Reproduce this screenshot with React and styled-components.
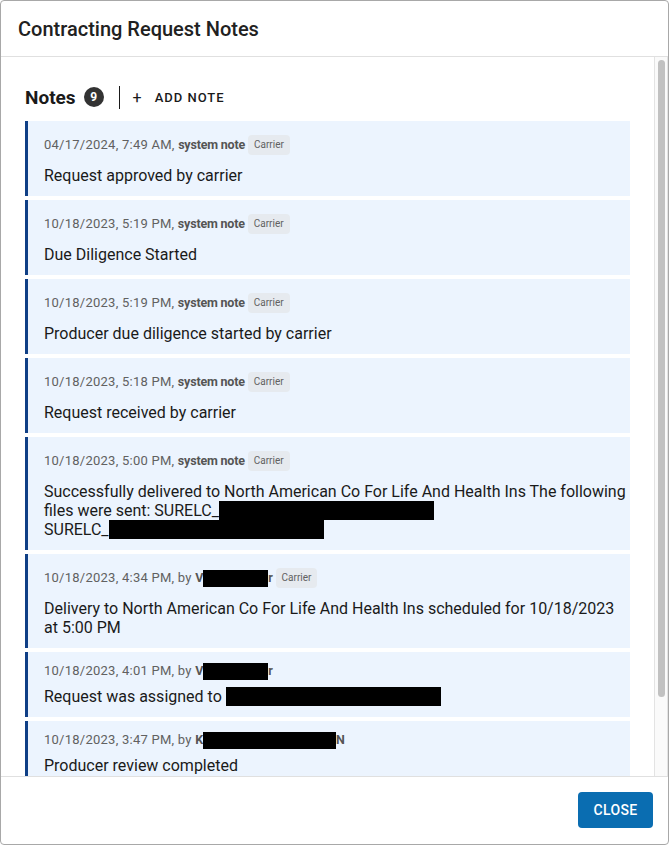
import React from "react";
import styled, { createGlobalStyle } from "styled-components";

const GlobalStyle = createGlobalStyle`
  html, body {
    margin: 0;
    padding: 0;
    background: #ffffff;
  }
  body {
    font-family: Roboto, "Liberation Sans", Arial, sans-serif;
    color: #212121;
  }
  * {
    box-sizing: border-box;
  }
`;

const notes = [
  {
    date: "04/17/2024, 7:49 AM",
    system: true,
    chip: true,
    text: [["Request approved by carrier"]],
  },
  {
    date: "10/18/2023, 5:19 PM",
    system: true,
    chip: true,
    text: [["Due Diligence Started"]],
  },
  {
    date: "10/18/2023, 5:19 PM",
    system: true,
    chip: true,
    text: [["Producer due diligence started by carrier"]],
  },
  {
    date: "10/18/2023, 5:18 PM",
    system: true,
    chip: true,
    text: [["Request received by carrier"]],
  },
  {
    date: "10/18/2023, 5:00 PM",
    system: true,
    chip: true,
    text: [
      [
        "Successfully delivered to North American Co For Life And Health Ins The following files were sent: SURELC_",
        { redact: 215 },
      ],
      ["SURELC_", { redact: 215 }],
    ],
  },
  {
    date: "10/18/2023, 4:34 PM",
    author: ["V", 65, "r"],
    chip: true,
    text: [["Delivery to North American Co For Life And Health Ins scheduled for 10/18/2023 at 5:00 PM"]],
  },
  {
    date: "10/18/2023, 4:01 PM",
    author: ["V", 65, "r"],
    text: [["Request was assigned to ", { redact: 215 }]],
  },
  {
    date: "10/18/2023, 3:47 PM",
    author: ["K", 133, "N"],
    text: [["Producer review completed"]],
  },
  {
    date: "10/18/2023, 3:40 PM",
    author: ["K", 133, "N"],
    text: [["Producer review started"]],
  },
];

const Dialog = styled.div`
  width: 669px;
  height: 845px;
  border: 1px solid #a8a8a8;
  border-radius: 4px;
  background: #fff;
  display: flex;
  flex-direction: column;
  overflow: hidden;
`;

const Header = styled.header`
  height: 56px;
  flex-shrink: 0;
  display: flex;
  align-items: center;
  padding: 0 17px;
  border-bottom: 1px solid #e0e0e0;
`;

const Title = styled.h2`
  margin: 0;
  font-size: 20px;
  font-weight: 500;
  color: #212121;
  letter-spacing: 0;
`;

const Main = styled.div`
  flex: 1;
  min-height: 0;
  display: flex;
`;

const Body = styled.div`
  flex: 1;
  overflow-y: auto;
  overflow-x: hidden;
  scrollbar-width: none;
  padding: 24px 24px 0 24px;

  &::-webkit-scrollbar {
    display: none;
  }
`;

const ScrollTrack = styled.div`
  width: 14px;
  flex-shrink: 0;
  background: #fafafa;
  border-left: 1px solid #e3e3e3;
  border-right: 1px solid #e3e3e3;
  padding: 3px 2px 0 3px;
`;

const ScrollThumb = styled.div`
  height: 637px;
  border-radius: 4px;
  background: #c1c1c1;
`;

const NotesBar = styled.div`
  height: 32px;
  display: flex;
  align-items: center;
  margin-bottom: 8px;
`;

const NotesTitle = styled.span`
  font-size: 19px;
  font-weight: 700;
  color: #1a1a1a;
`;

const CountBadge = styled.span`
  width: 20px;
  height: 20px;
  border-radius: 50%;
  background: #333333;
  color: #fff;
  font-size: 12px;
  font-weight: 700;
  display: inline-flex;
  align-items: center;
  justify-content: center;
  margin-left: 8px;
`;

const Divider = styled.span`
  width: 1px;
  height: 23px;
  background: #1a1a1a;
  margin: 0 13px 0 15px;
`;

const AddButton = styled.button`
  border: none;
  background: none;
  padding: 0;
  display: inline-flex;
  align-items: center;
  gap: 13px;
  font-family: inherit;
  font-size: 13px;
  font-weight: 500;
  letter-spacing: 1px;
  color: #1a1a1a;
  cursor: pointer;
`;

const Plus = styled.span`
  font-size: 16px;
  font-weight: 400;
  letter-spacing: 0;
`;

const NoteList = styled.div`
  display: flex;
  flex-direction: column;
  gap: 4px;
`;

const Card = styled.div`
  background: #ecf4fe;
  border-left: 3px solid #0f3f86;
  padding: 12px 2px 11px 16px;
`;

const Meta = styled.div`
  display: flex;
  align-items: center;
  min-height: 14px;
  font-size: 13px;
  letter-spacing: 0.25px;
  color: #616161;
  line-height: 14px;
  white-space: pre;
`;

const Author = styled.span`
  font-weight: 700;
  font-size: 12.5px;
  letter-spacing: -0.2px;
  color: #555;
  display: inline-flex;
  align-items: center;
`;

const Chip = styled.span`
  height: 20px;
  margin: 2px 0 2px 3px;
  padding: 0 6px;
  border-radius: 4px;
  background: #e6eaef;
  color: #616161;
  font-size: 10px;
  letter-spacing: 0;
  display: inline-flex;
  align-items: center;
`;

const Text = styled.div`
  margin-top: 9px;
  font-size: 16px;
  line-height: 19px;
  color: #1a1a1a;
`;

const Redacted = styled.span`
  display: inline-block;
  background: #000;
  height: 19px;
  vertical-align: -4px;
`;

const NameRedacted = styled.span`
  display: inline-block;
  background: #000;
  height: 17px;
  margin: -2px 0;
`;

const Footer = styled.footer`
  height: 68px;
  flex-shrink: 0;
  border-top: 1px solid #e0e0e0;
  display: flex;
  align-items: center;
  justify-content: flex-end;
  padding: 0 15px 2px 0;
`;

const CloseButton = styled.button`
  width: 75px;
  height: 36px;
  border: none;
  border-radius: 4px;
  background: #0a6db1;
  color: #fff;
  font-family: inherit;
  font-size: 14px;
  font-weight: 500;
  letter-spacing: 0.3px;
  cursor: pointer;
`;

function renderParts(parts) {
  return parts.map((p, i) =>
    typeof p === "string" ? (
      <React.Fragment key={i}>{p}</React.Fragment>
    ) : (
      <Redacted key={i} style={{ width: p.redact }} />
    )
  );
}

function Note({ note }) {
  return (
    <Card>
      <Meta>
        {note.system ? `${note.date}, ` : `${note.date}, by `}
        {note.system ? (
          <Author>system note</Author>
        ) : (
          <Author>
            {note.author[0]}
            <NameRedacted style={{ width: note.author[1] }} />
            {note.author[2]}
          </Author>
        )}
        {note.chip && <Chip>Carrier</Chip>}
      </Meta>
      <Text>
        {note.text.map((line, i) => (
          <div key={i}>{renderParts(line)}</div>
        ))}
      </Text>
    </Card>
  );
}

export default function App() {
  return (
    <>
      <GlobalStyle />
      <Dialog>
        <Header>
          <Title>Contracting Request Notes</Title>
        </Header>
        <Main>
          <Body>
            <NotesBar>
              <NotesTitle>Notes</NotesTitle>
              <CountBadge>9</CountBadge>
              <Divider />
              <AddButton>
                <Plus>+</Plus>
                ADD NOTE
              </AddButton>
            </NotesBar>
            <NoteList>
              {notes.map((n, i) => (
                <Note key={i} note={n} />
              ))}
            </NoteList>
          </Body>
          <ScrollTrack>
            <ScrollThumb />
          </ScrollTrack>
        </Main>
        <Footer>
          <CloseButton>CLOSE</CloseButton>
        </Footer>
      </Dialog>
    </>
  );
}
